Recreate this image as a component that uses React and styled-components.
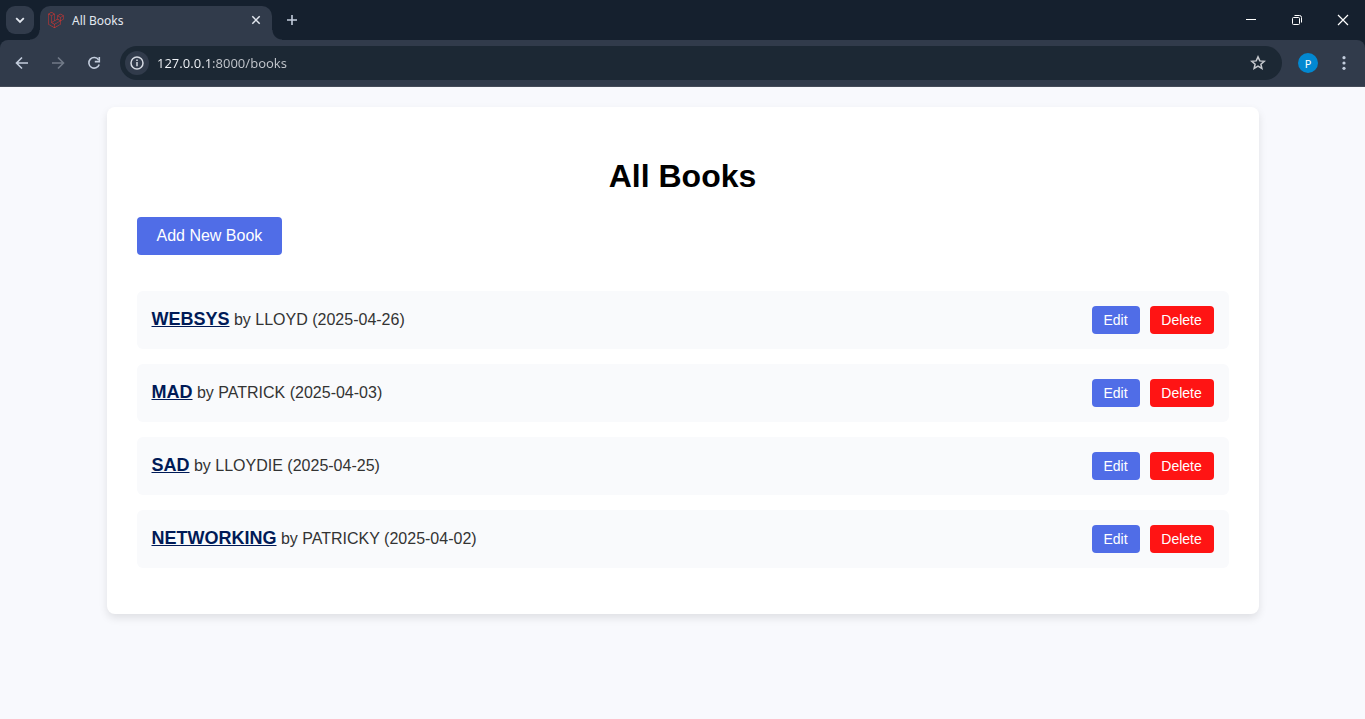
import React from "react";
import styled, { createGlobalStyle } from "styled-components";
import { SiLaravel } from "react-icons/si";

const GlobalStyle = createGlobalStyle`
  * { box-sizing: border-box; }
  body {
    margin: 0;
    background: #f8f9fd;
    font-family: Arial, "Liberation Sans", sans-serif;
    font-size: 16px;
    color: #333;
  }
`;

const chromeFont = `"Noto Sans", "Open Sans", sans-serif`;

const Browser = styled.header`
  background: #15202e;
  font-family: ${chromeFont};
`;

const TabStrip = styled.div`
  display: flex;
  align-items: flex-end;
  height: 40px;
  padding-left: 6px;
`;

const IconButton = styled.button`
  display: flex;
  align-items: center;
  justify-content: center;
  flex: none;
  width: ${(p) => p.$width || 28}px;
  height: ${(p) => p.$height || 28}px;
  padding: 0;
  border: 0;
  border-radius: ${(p) => p.$radius || 0}px;
  background: ${(p) => p.$bg || "transparent"};
  color: ${(p) => p.$color || "#c3cddd"};
  font: 11px ${chromeFont};
`;

const TabSearch = styled.div`
  align-self: center;
  margin-right: 6px;
`;

const Tab = styled.div`
  position: relative;
  display: flex;
  align-items: center;
  width: 232px;
  height: 34px;
  padding: 0 2px 6px 8px;
  border-radius: 10px 10px 0 0;
  background: #313b4b;
  color: #e3e8f0;
  font-size: 12px;
  line-height: 16px;

  &::before,
  &::after {
    content: "";
    position: absolute;
    bottom: 0;
    width: 10px;
    height: 10px;
  }
  &::before {
    right: 100%;
    background: radial-gradient(circle at 0 0, transparent 9px, #313b4b 10px);
  }
  &::after {
    left: 100%;
    background: radial-gradient(circle at 100% 0, transparent 9px, #313b4b 10px);
  }
`;

const TabTitle = styled.span`
  flex: 1;
  margin-left: 8px;
  padding-top: 2px;
`;

const NewTab = styled.div`
  align-self: center;
  margin-left: 6px;
`;

const WindowControls = styled.div`
  display: flex;
  align-self: flex-start;
  margin-left: auto;
`;

const Toolbar = styled.div`
  display: flex;
  align-items: center;
  gap: 8px;
  height: 47px;
  padding: 0 7px 0 8px;
  border-bottom: 1px solid #444b58;
  border-radius: 8px 8px 0 0;
  background: #313b4b;
`;

const AddressBar = styled.div`
  display: flex;
  align-items: center;
  flex: 1;
  height: 34px;
  margin: 0 8px 0 4px;
  padding: 0 10px 0 5px;
  border-radius: 17px;
  background: #1c2834;
`;

const AddressInput = styled.input`
  flex: 1;
  min-width: 0;
  margin-left: 8px;
  padding: 0;
  border: 0;
  outline: 0;
  background: linear-gradient(to right, #f1f4f8 56px, #c2c6cc 56px);
  background-clip: text;
  color: transparent;
  font: 13px/20px ${chromeFont};
`;

const Account = styled.div`
  display: flex;
  align-items: center;
  gap: 12px;
`;

const Page = styled.main`
  display: flow-root;
`;

const Card = styled.section`
  width: calc(80% + 60px);
  margin: 20px auto;
  padding: 30px 30px 46px;
  border-radius: 8px;
  background: #fff;
  box-shadow: 0 4px 8px rgba(0, 0, 0, 0.1);
`;

const Heading = styled.h1`
  margin: 20px 0 22px;
  color: #000;
  font-size: 32px;
  line-height: 38px;
  text-align: center;
`;

const AddLink = styled.a`
  display: inline-block;
  padding: 9px 20px;
  border-radius: 4px;
  background: #506de7;
  color: #fff;
  line-height: 20px;
  text-decoration: none;
`;

const BookList = styled.ul`
  display: flex;
  flex-direction: column;
  gap: 15px;
  margin: 36px 0 0;
  padding: 0;
  list-style: none;
`;

const BookRow = styled.li`
  display: flex;
  align-items: center;
  justify-content: space-between;
  height: 58px;
  padding: 0 15px;
  border-radius: 6px;
  background: #f9fafc;
`;

const BookInfo = styled.div`
  padding-bottom: 2px;
`;

const BookTitle = styled.a`
  color: #001a57;
  font-size: 18px;
  font-weight: bold;
`;

const Actions = styled.div`
  display: flex;
  gap: 10px;
`;

const EditLink = styled.a`
  width: 48px;
  padding: 6px 0;
  border-radius: 4px;
  background: #506de7;
  color: #fff;
  font-size: 14px;
  line-height: 16px;
  text-align: center;
  text-decoration: none;
`;

const DeleteButton = styled.button`
  width: 64px;
  padding: 6px 0;
  border: 0;
  border-radius: 4px;
  background: #ff1414;
  color: #fff;
  font: 14px/16px Arial, "Liberation Sans", sans-serif;
`;

const Icon = ({ size = 16, weight = 2, children }) => (
  <svg width={size} height={size} viewBox={`0 0 ${size} ${size}`} fill="none"
    stroke="currentColor" strokeWidth={weight} aria-hidden="true">
    {children}
  </svg>
);

const books = [
  { title: "WEBSYS", author: "LLOYD", date: "2025-04-26" },
  { title: "MAD", author: "PATRICK", date: "2025-04-03" },
  { title: "SAD", author: "LLOYDIE", date: "2025-04-25" },
  { title: "NETWORKING", author: "PATRICKY", date: "2025-04-02" },
];

function BrowserBar() {
  return (
    <Browser>
      <TabStrip>
        <TabSearch>
          <IconButton $radius={9} $bg="#313b4b" $color="#e3e8f0" aria-label="Search tabs">
            <Icon weight={1.8}><path d="M4.2 6.2 8 10l3.8-3.8" /></Icon>
          </IconButton>
        </TabSearch>
        <Tab>
          <SiLaravel size={16} color="#e0352f" aria-hidden="true" />
          <TabTitle>All Books</TabTitle>
          <IconButton $color="#e3e8f0" aria-label="Close tab">
            <Icon weight={1.5}><path d="m4.3 4.3 7.4 7.4m0-7.4-7.4 7.4" /></Icon>
          </IconButton>
        </Tab>
        <NewTab>
          <IconButton aria-label="New tab">
            <Icon weight={1.6}><path d="M8 3v10M3 8h10" /></Icon>
          </IconButton>
        </NewTab>
        <WindowControls>
          <IconButton $width={46} $height={40} $color="#fff" aria-label="Minimize">
            <Icon weight={1}><path d="M4 7.5h10" /></Icon>
          </IconButton>
          <IconButton $width={46} $height={40} $color="#fff" aria-label="Restore">
            <Icon weight={1}>
              <rect x="4.5" y="5.5" width="7" height="7" rx="1" />
              <path d="M6.5 3.5h5a2 2 0 0 1 2 2v5" />
            </Icon>
          </IconButton>
          <IconButton $width={46} $height={40} $color="#fff" aria-label="Close">
            <Icon weight={1.2}><path d="m4 3 10 10M14 3 4 13" /></Icon>
          </IconButton>
        </WindowControls>
      </TabStrip>
      <Toolbar>
        <IconButton aria-label="Back">
          <Icon weight={1.6}><path d="M14 8H3M8 2.5 2.5 8 8 13.5" /></Icon>
        </IconButton>
        <IconButton $color="#717a88" aria-label="Forward">
          <Icon weight={1.6}><path d="M2 8h11M8 2.5 13.5 8 8 13.5" /></Icon>
        </IconButton>
        <IconButton aria-label="Reload">
          <Icon weight={1.6}>
            <path d="M12.6 4.9A5.3 5.3 0 1 0 13.2 9.4" />
            <path d="M13.3 2v4.6H8.8" />
          </Icon>
        </IconButton>
        <AddressBar>
          <IconButton $width={24} $height={24} $radius={12} $bg="#313b4b" $color="#d5dae2" aria-label="Site information">
            <Icon weight={1.5}>
              <circle cx="8" cy="8" r="6" />
              <path d="M8 7v4.2M8 4.5v1.6" />
            </Icon>
          </IconButton>
          <AddressInput aria-label="Address" defaultValue="127.0.0.1:8000/books" />
          <IconButton $color="#c6c9ce" aria-label="Bookmark this page">
            <Icon weight={1.5}>
              <path d="m8 1.9 1.8 4 4.4.4-3.3 2.9 1 4.3L8 11.2l-3.9 2.3 1-4.3L1.8 6.3l4.4-.4z" />
            </Icon>
          </IconButton>
        </AddressBar>
        <Account>
          <IconButton $width={20} $height={20} $radius={10} $bg="#0288d1" $color="#fff" aria-label="Profile">
            P
          </IconButton>
          <IconButton aria-label="Menu">
            <Icon>
              <g fill="currentColor" stroke="none">
                <circle cx="8" cy="2.7" r="1.6" />
                <circle cx="8" cy="8" r="1.6" />
                <circle cx="8" cy="13.3" r="1.6" />
              </g>
            </Icon>
          </IconButton>
        </Account>
      </Toolbar>
    </Browser>
  );
}

export default function App() {
  return (
    <>
      <GlobalStyle />
      <BrowserBar />
      <Page>
        <Card>
          <Heading>All Books</Heading>
          <AddLink href="#add">Add New Book</AddLink>
          <BookList>
            {books.map((book) => (
              <BookRow key={book.title}>
                <BookInfo>
                  <BookTitle href={`#${book.title}`}>{book.title}</BookTitle> by {book.author} ({book.date})
                </BookInfo>
                <Actions>
                  <EditLink href={`#edit-${book.title}`}>Edit</EditLink>
                  <DeleteButton type="button">Delete</DeleteButton>
                </Actions>
              </BookRow>
            ))}
          </BookList>
        </Card>
      </Page>
    </>
  );
}
